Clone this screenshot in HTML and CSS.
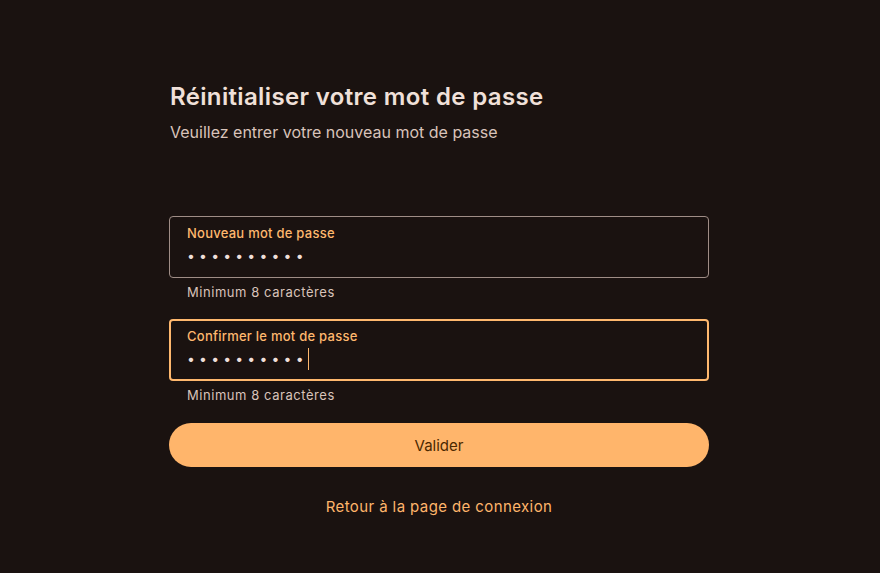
FILE: index.html
```html
<!DOCTYPE html>
<html lang="fr">
<head>
<meta charset="utf-8">
<title>Réinitialiser votre mot de passe</title>
<link rel="stylesheet" href="styles.css">
</head>
<body>
<main class="page">
  <section class="card">
    <h1 class="title">Réinitialiser votre mot de passe</h1>
    <p class="subtitle">Veuillez entrer votre nouveau mot de passe</p>

    <div class="form">
      <div class="field">
        <div class="box">
          <span class="label">Nouveau mot de passe</span>
          <span class="value">••••••••••</span>
        </div>
        <span class="helper">Minimum 8 caractères</span>
      </div>

      <div class="field">
        <div class="box box-focus">
          <span class="label">Confirmer le mot de passe</span>
          <span class="value">••••••••••<span class="caret"></span></span>
        </div>
        <span class="helper">Minimum 8 caractères</span>
      </div>

      <button class="submit" type="button">Valider</button>
      <a class="back" href="#">Retour à la page de connexion</a>
    </div>
  </section>
</main>
</body>
</html>
```

FILE: styles.css
```css
html, body {
  margin: 0;
  padding: 0;
  background: #1a1210;
}

body {
  font-family: "Inter", "DejaVu Sans", sans-serif;
  color: #efdfd8;
  height: 573px;
}

.page {
  display: flex;
  justify-content: center;
  padding-right: 2px;
}

.card {
  width: 540px;
  padding-top: 82px;
  display: flex;
  flex-direction: column;
}

.title {
  margin: 0 0 0 1px;
  font-size: 24px;
  line-height: 30px;
  font-weight: 600;
  letter-spacing: 0.35px;
  color: #f0e0d9;
}

.subtitle {
  margin: 10px 0 0 1px;
  font-size: 16px;
  line-height: 20px;
  color: #d9c3ba;
}

.form {
  margin-top: 74px;
  display: flex;
  flex-direction: column;
}

.field {
  display: flex;
  flex-direction: column;
  margin-bottom: 19px;
}

.box {
  box-sizing: border-box;
  height: 62px;
  border: 1px solid #9f8d86;
  border-radius: 4px;
  padding: 7px 17px 0 17px;
  display: flex;
  flex-direction: column;
}

.box-focus {
  border: 2px solid #ffb86e;
  padding: 6px 16px 0 16px;
}

.label {
  font-size: 13px;
  line-height: 18px;
  font-weight: 500;
  letter-spacing: 0.25px;
  color: #ffb86e;
}

.value {
  display: flex;
  align-items: center;
  margin-top: 3px;
  font-size: 14px;
  line-height: 22px;
  letter-spacing: 4.2px;
  color: #efdfd8;
}

.caret {
  display: inline-block;
  width: 1px;
  height: 22px;
  background: #ffb86e;
}

.helper {
  margin: 6px 0 0 18px;
  font-size: 13px;
  line-height: 16px;
  letter-spacing: 0.55px;
  color: #d9c3ba;
}

.submit {
  margin-top: 1px;
  height: 44px;
  border: none;
  border-radius: 22px;
  background: #ffb56b;
  color: #4b2800;
  font-family: inherit;
  font-size: 15px;
  font-weight: 400;
  cursor: pointer;
}

.back {
  margin-top: 30px;
  align-self: center;
  font-size: 15px;
  line-height: 20px;
  letter-spacing: 0.4px;
  color: #ffb56b;
  text-decoration: none;
}
```
